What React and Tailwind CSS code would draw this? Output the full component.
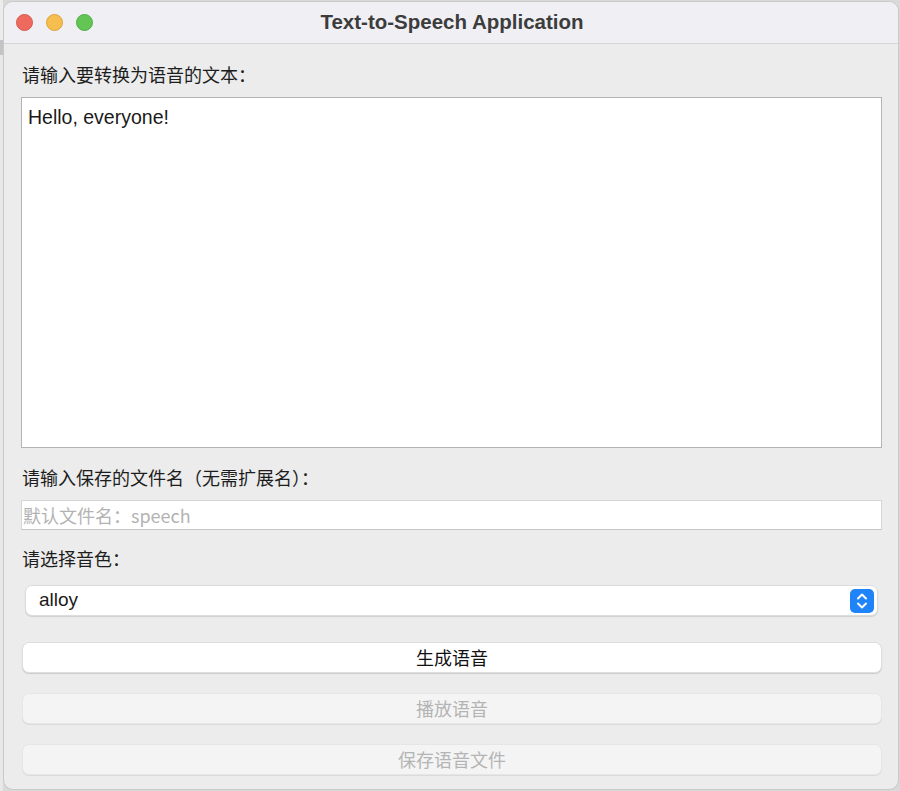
import React, { useState } from 'react';

const cjk = { fontFamily: '"Noto Sans CJK SC", "Liberation Sans", sans-serif' };
const latin = { fontFamily: '"Liberation Sans", "Noto Sans CJK SC", sans-serif' };

const Stepper = () => (
  <div className="w-[24px] h-[24px] rounded-[5px] bg-[#1f83fa] flex items-center justify-center">
    <svg width="14" height="18" viewBox="0 0 14 18" fill="none" stroke="white" strokeWidth="2" strokeLinecap="round" strokeLinejoin="round">
      <path d="M3 6.5 L7 2.5 L11 6.5" />
      <path d="M3 11.5 L7 15.5 L11 11.5" />
    </svg>
  </div>
);

const App = () => {
  const [text, setText] = useState('Hello, everyone!');
  const [fileName, setFileName] = useState('');
  const [voice, setVoice] = useState('alloy');

  return (
    <div className="w-[900px] h-[791px] bg-[#d9d9d9] flex overflow-hidden">
      {/* desktop sliver */}
      <div className="w-[3px] flex flex-col">
        <div className="h-[40px] bg-[#ececec]" />
        <div className="h-[15px] bg-[#c4c4c4]" />
        <div className="flex-1 bg-[#e8e8e8]" />
      </div>

      {/* Window */}
      <div className="mt-[1px] w-[896px] h-[789px] rounded-[10px] border border-[#c9c9c9] bg-[#ececec] overflow-hidden flex flex-col">
        {/* Title bar */}
        <div className="h-[42px] bg-[#efeff4] border-b border-[#d4d4d4] flex items-center relative">
          <div className="flex gap-[13px] pl-[12px]">
            <div className="w-[17px] h-[17px] rounded-full bg-[#ee6a5f] border border-[#d9574d]" />
            <div className="w-[17px] h-[17px] rounded-full bg-[#f5be4f] border border-[#dea33a]" />
            <div className="w-[17px] h-[17px] rounded-full bg-[#62c554] border border-[#4fae42]" />
          </div>
          <div className="absolute inset-0 flex items-center justify-center pl-[2px] text-[20.5px] font-bold text-[#3c3c3c]" style={latin}>
            Text-to-Speech Application
          </div>
        </div>

        {/* Content */}
        <div className="pl-[17px] pr-[16px] pt-[18px] flex flex-col" style={cjk}>
          <div className="h-[24px] leading-[24px] text-[18px] text-[#1d1d1d] pl-[1px]">请输入要转换为语音的文本：</div>
          <textarea
            value={text}
            onChange={(e) => setText(e.target.value)}
            className="mt-[11px] h-[351px] bg-white border border-[#b4b4b4] px-[6px] pt-[5px] text-[19.5px] text-[#1a1a1a] resize-none outline-none"
            style={latin}
          />

          <div className="mt-[17px] h-[24px] leading-[24px] text-[18px] text-[#1d1d1d] pl-[1px]">请输入保存的文件名（无需扩展名）：</div>
          <input
            value={fileName}
            onChange={(e) => setFileName(e.target.value)}
            placeholder="默认文件名：speech"
            className="mt-[11px] h-[30px] bg-white border border-[#d6d6d6] border-b-[#c4c4c4] px-[1px] text-[18px] text-[#1a1a1a] placeholder:text-[#b3b3b3] outline-none"
          />

          <div className="mt-[16px] h-[24px] leading-[24px] text-[18px] text-[#1d1d1d] pl-[1px]">请选择音色：</div>
          <div className="mt-[15px] mx-[4px] h-[31px] bg-white rounded-[7px] border border-[#dcdcdc] shadow-[0_1px_1px_rgba(0,0,0,0.12)] flex items-center justify-between pl-[13px] pr-[3px]">
            <span className="text-[19px] text-[#1a1a1a]" style={latin}>{voice}</span>
            <Stepper />
          </div>

          <button
            onClick={() => setVoice('alloy')}
            className="mt-[26px] ml-[1px] h-[31px] bg-white rounded-[7px] border border-[#dedede] shadow-[0_1px_1px_rgba(0,0,0,0.14)] text-[18px] text-[#111]"
          >
            生成语音
          </button>
          <button disabled className="mt-[20px] ml-[1px] h-[31px] bg-[#f4f4f4] rounded-[7px] border border-[#e6e6e6] shadow-[0_1px_0_rgba(0,0,0,0.07)] text-[18px] text-[#b4b4b4]">
            播放语音
          </button>
          <button disabled className="mt-[20px] ml-[1px] h-[31px] bg-[#f4f4f4] rounded-[7px] border border-[#e6e6e6] shadow-[0_1px_0_rgba(0,0,0,0.07)] text-[18px] text-[#b4b4b4]">
            保存语音文件
          </button>
        </div>
      </div>
    </div>
  );
};

export default App;
